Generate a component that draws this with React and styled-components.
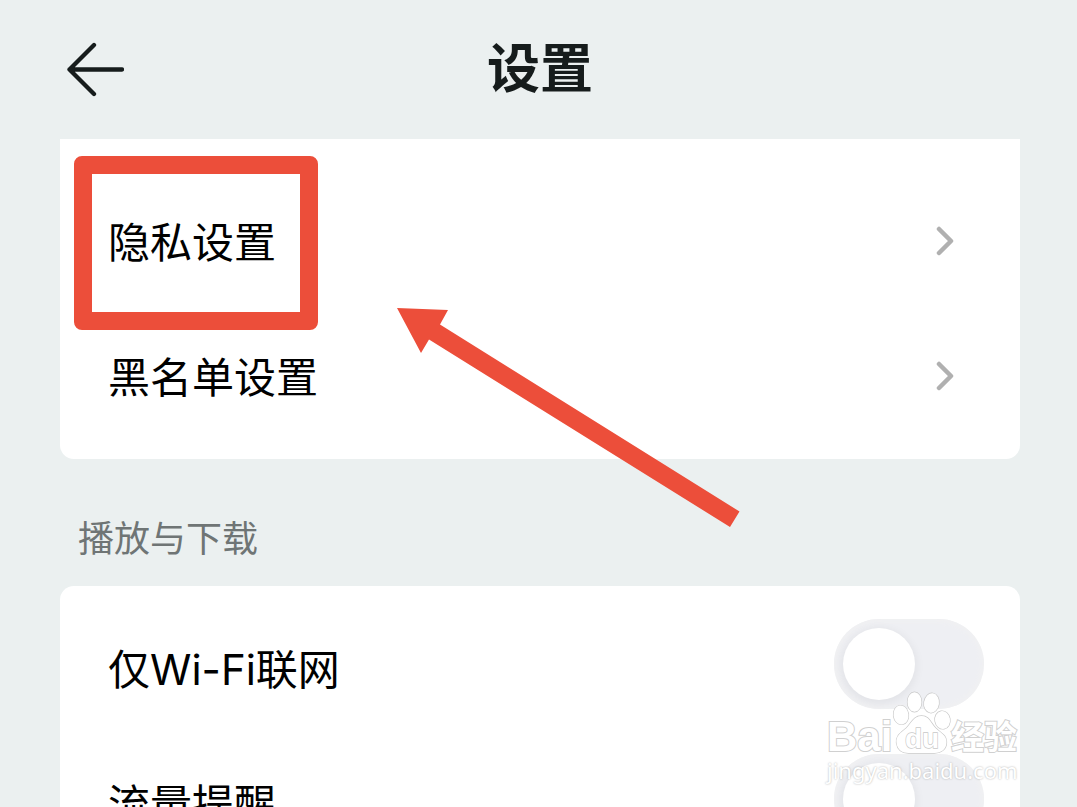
import React, { useState } from "react";
import styled, { createGlobalStyle } from "styled-components";

const GlobalStyle = createGlobalStyle`
  * {
    box-sizing: border-box;
  }
  body {
    margin: 0;
    background: #ebf0f0;
    font-family: Inter, "Noto Sans CJK SC", sans-serif;
    color: #000;
  }
`;

const Page = styled.div`
  position: relative;
  height: 100vh;
  padding: 0 57px 0 60px;
  overflow: hidden;
`;

const Header = styled.header`
  display: grid;
  grid-template-columns: 1fr auto 1fr;
  align-items: center;
  height: 139px;
`;

const BackButton = styled.button`
  display: flex;
  justify-self: start;
  padding: 0 0 0 4px;
  border: none;
  background: none;
`;

const Title = styled.h1`
  margin: 0;
  padding-bottom: 2px;
  font-size: 53px;
  line-height: 80px;
  font-weight: 700;
  color: #161c1c;
`;

const Card = styled.section`
  position: relative;
  padding: ${(props) => (props.$attached ? "34px 0 16px" : "10px 0 15px")};
  border-radius: ${(props) => (props.$attached ? "0 0 14px 14px" : "14px")};
  background: #fff;
`;

const rowLayout = `
  display: flex;
  align-items: center;
  justify-content: space-between;
  width: 100%;
  height: 135px;
  font-size: 42px;
  line-height: 60px;
`;

const LinkRow = styled.button`
  ${rowLayout}
  padding: 0 66px 0 48px;
  border: none;
  background: none;
  color: inherit;
  font-family: inherit;
  text-align: left;
`;

const LinkLabel = styled.span`
  padding-top: 4px;
`;

const SwitchRow = styled.label`
  ${rowLayout}
  padding: 0 36px 0 48px;
`;

const SwitchLabel = styled.span`
  padding-top: 12px;
`;

const Switch = styled.input`
  appearance: none;
  flex: none;
  display: flex;
  align-items: center;
  width: 150px;
  height: 90px;
  margin: 0;
  padding: 0 9px;
  border-radius: 45px;
  background: #eeeff3;
  box-shadow: inset 0 0 6px 2px #f1f1f2;

  &::before {
    content: "";
    width: 72px;
    height: 72px;
    border-radius: 50%;
    background: #fff;
    box-shadow: 0 2px 8px 2px rgba(0, 0, 0, 0.05);
  }
  &:checked {
    justify-content: flex-end;
    background: #31c27c;
    box-shadow: none;
  }
`;

const SectionTitle = styled.h2`
  margin: 0;
  padding: 54px 18px 21px;
  font-size: 36px;
  line-height: 52px;
  font-weight: 400;
  color: #6f7575;
`;

const Highlight = styled.div`
  position: absolute;
  top: 17px;
  left: 14px;
  width: 244px;
  height: 174px;
  border: 18px solid #ec4e3a;
  border-radius: 8px;
  pointer-events: none;
`;

const Pointer = styled.svg`
  position: absolute;
  z-index: 1;
  top: 169px;
  left: 337px;
  pointer-events: none;
`;

const Watermark = styled.div`
  position: absolute;
  right: 57px;
  bottom: 21px;
  display: flex;
  flex-direction: column;
  width: 193px;
  color: #fff;
  pointer-events: none;
`;

const Brand = styled.div`
  display: flex;
  align-items: flex-end;
  justify-content: space-between;
  height: 64px;
  padding-right: 3px;
  paint-order: stroke fill;
  -webkit-text-stroke: 2px #d0d0d0;
`;

const BrandName = styled.span`
  font-family: "Liberation Sans", sans-serif;
  font-size: 42px;
  line-height: 34px;
  font-weight: 700;
`;

const BrandTopic = styled.span`
  font-size: 33px;
  line-height: 34px;
  font-weight: 700;
`;

const Site = styled.span`
  font-family: "Noto Sans", sans-serif;
  font-size: 22px;
  line-height: 32px;
  text-shadow: 0 0 2px #aaa;
`;

const Paw = styled.svg`
  flex: none;
  margin: 0 -8px;
`;

const PawText = styled.text`
  font-family: "Liberation Sans", sans-serif;
  font-size: 28px;
  font-weight: 700;
`;

function BackIcon() {
  return (
    <svg width="60" height="56" viewBox="0 0 60 56" fill="none" stroke="#161c1c" strokeWidth="4.3" strokeLinecap="round" strokeLinejoin="round">
      <path d="M30 3 5.500 27.500 30 52M5.500 27.500H58" />
    </svg>
  );
}

function Chevron() {
  return (
    <svg width="18" height="30" viewBox="0 0 18 30" fill="none" stroke="#b0b0b0" strokeWidth="4.500" strokeLinecap="round" strokeLinejoin="round">
      <path d="M3 3 15 15 3 27" />
    </svg>
  );
}

function BaiduPaw() {
  return (
    <Paw width="60" height="64" viewBox="0 0 60 64" fill="#fff" stroke="#c8c8c8" strokeWidth="1.3">
      <ellipse cx="9" cy="25" rx="7.500" ry="9.500" transform="rotate(-8 9 25)" />
      <ellipse cx="22.500" cy="12" rx="7" ry="9.800" />
      <ellipse cx="39.500" cy="13" rx="7.500" ry="9.800" transform="rotate(8 39.500 13)" />
      <ellipse cx="50.500" cy="30" rx="7.500" ry="9" transform="rotate(-10 50.500 30)" />
      <path d="M29.500 26c-8 0-10 7-15 12-6 5-11 8-10 15 1 7 6 10 12 10h26c7 0 12-4 12-11 0-7-6-9-11-14-5-5-6-12-14-12z" />
      <PawText x="30" y="58" textAnchor="middle">
        du
      </PawText>
    </Paw>
  );
}

const links = ["隐私设置", "黑名单设置"];

const switches = [
  { id: "wifi", title: "仅Wi-Fi联网" },
  { id: "traffic", title: "流量提醒" },
];

function App() {
  const [enabled, setEnabled] = useState({});

  const toggle = (id) => setEnabled({ ...enabled, [id]: !enabled[id] });

  return (
    <Page>
      <GlobalStyle />
      <Header>
        <BackButton aria-label="返回">
          <BackIcon />
        </BackButton>
        <Title>设置</Title>
      </Header>
      <Card $attached>
        {links.map((title) => (
          <LinkRow key={title}>
            <LinkLabel>{title}</LinkLabel>
            <Chevron />
          </LinkRow>
        ))}
        <Highlight />
        <Pointer width="344" height="220" viewBox="0 0 344 220" fill="#ec4e3a">
          <path d="M0 0 51 2 43 16.500 342.500 203.500 333 219 32 31.500 24 45z" />
        </Pointer>
      </Card>
      <SectionTitle>播放与下载</SectionTitle>
      <Card>
        {switches.map(({ id, title }) => (
          <SwitchRow key={id} htmlFor={id}>
            <SwitchLabel>{title}</SwitchLabel>
            <Switch id={id} type="checkbox" role="switch" checked={!!enabled[id]} onChange={() => toggle(id)} />
          </SwitchRow>
        ))}
      </Card>
      <Watermark>
        <Brand>
          <BrandName>Bai</BrandName>
          <BaiduPaw />
          <BrandTopic>经验</BrandTopic>
        </Brand>
        <Site>jingyan.baidu.com</Site>
      </Watermark>
    </Page>
  );
}

export default App;
